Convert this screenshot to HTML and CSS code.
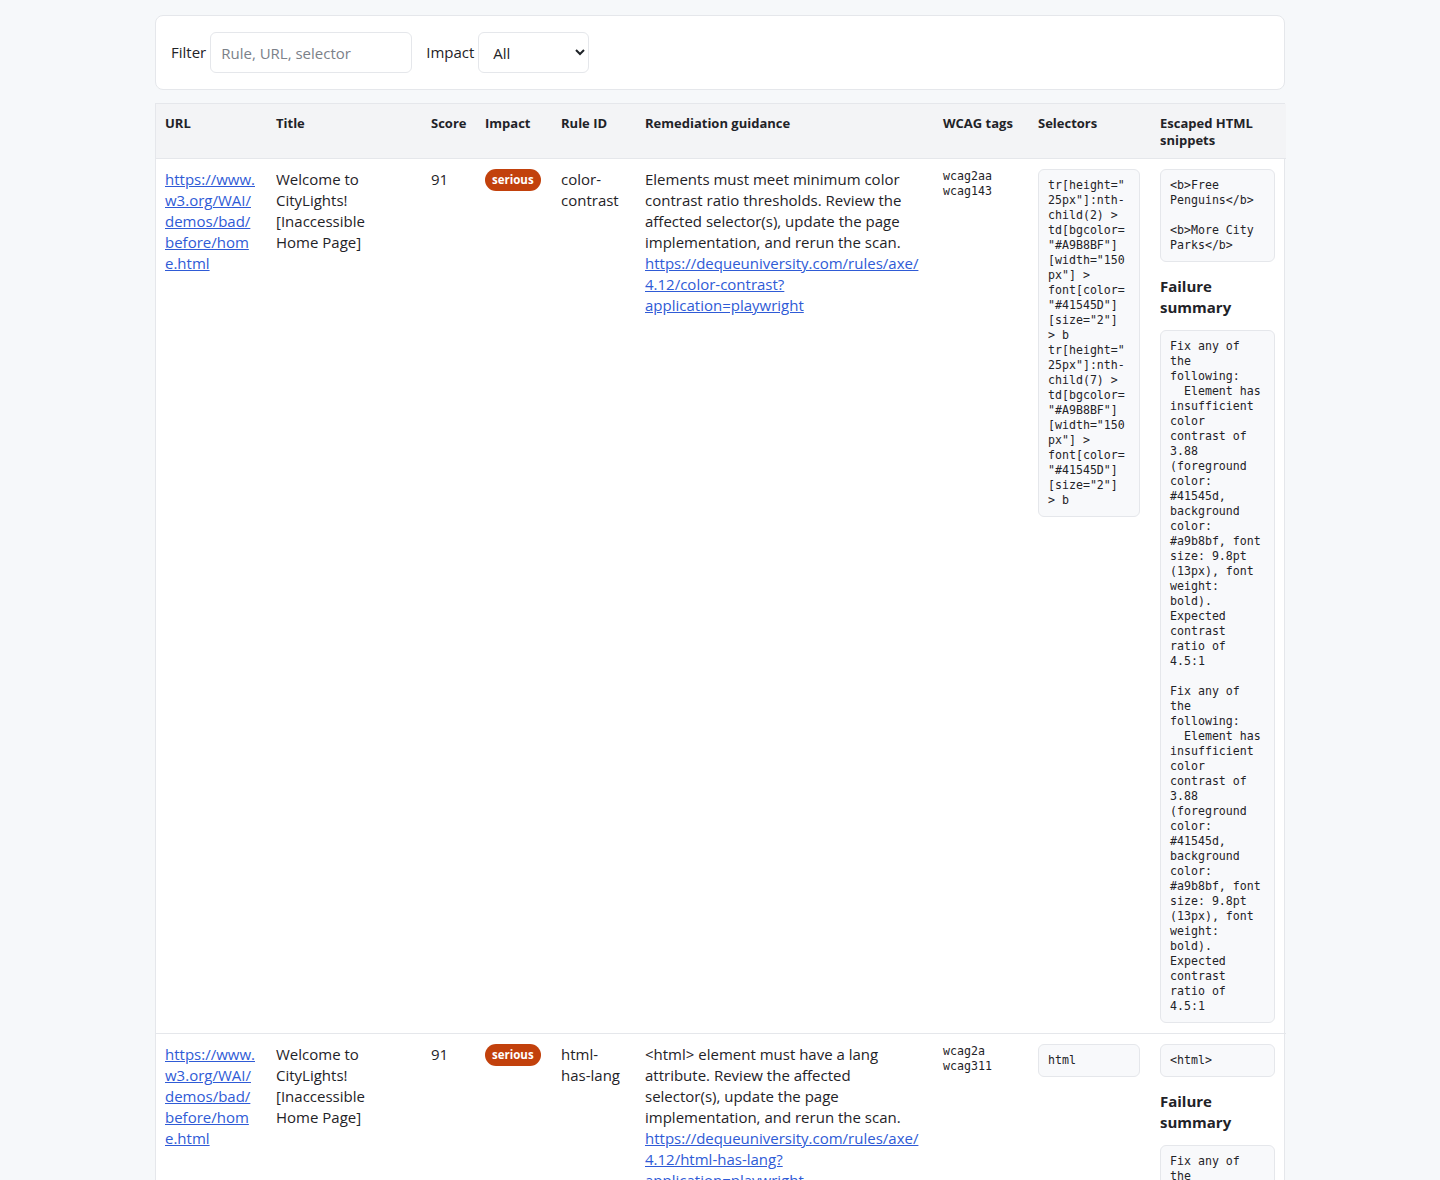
FILE: index.html
```html
<!DOCTYPE html>
<html>
<head>
    <meta charset="utf-8">
    <title>Accessibility Findings</title>
    <meta name="viewport" content="width=device-width, initial-scale=1.0">
    <link rel="stylesheet" href="styles.css">
</head>
<body>
    <div class="page">
        <div class="filters">
            <label class="field">Filter <input type="text" placeholder="Rule, URL, selector"></label>
            <label class="field">Impact
                <select>
                    <option>All</option>
                    <option>critical</option>
                    <option>serious</option>
                    <option>moderate</option>
                    <option>minor</option>
                </select>
            </label>
        </div>

        <div class="results">
            <table>
                <colgroup>
                    <col style="width:111px">
                    <col style="width:155px">
                    <col style="width:54px">
                    <col style="width:76px">
                    <col style="width:84px">
                    <col style="width:298px">
                    <col style="width:95px">
                    <col style="width:122px">
                    <col style="width:135px">
                </colgroup>
                <thead>
                    <tr>
                        <th>URL</th>
                        <th>Title</th>
                        <th>Score</th>
                        <th>Impact</th>
                        <th>Rule ID</th>
                        <th>Remediation guidance</th>
                        <th>WCAG tags</th>
                        <th>Selectors</th>
                        <th>Escaped HTML snippets</th>
                    </tr>
                </thead>
                <tbody>
                    <tr>
                        <td class="url"><a href="#">https://www.w3.org/WAI/demos/bad/before/home.html</a></td>
                        <td>Welcome to CityLights! [Inaccessible Home Page]</td>
                        <td>91</td>
                        <td><span class="badge">serious</span></td>
                        <td>color-contrast</td>
                        <td>Elements must meet minimum color contrast ratio thresholds. Review the affected selector(s), update the page implementation, and rerun the scan. <a href="#">https://dequeuniversity.com/rules/axe/4.12/color-contrast?application=playwright</a></td>
                        <td class="tags">wcag2aa<br>wcag143</td>
                        <td><pre class="code">tr[height="25px"]:nth-child(2) &gt; td[bgcolor="#A9B8BF"][width="150px"] &gt; font[color="#41545D"][size="2"] &gt; b
tr[height="25px"]:nth-child(7) &gt; td[bgcolor="#A9B8BF"][width="150px"] &gt; font[color="#41545D"][size="2"] &gt; b</pre></td>
                        <td>
                            <pre class="code">&lt;b&gt;Free Penguins&lt;/b&gt;

&lt;b&gt;More City Parks&lt;/b&gt;</pre>
                            <h4>Failure summary</h4>
                            <pre class="code">Fix any of the following:
  Element has insufficient color contrast of 3.88 (foreground color: #41545d, background color: #a9b8bf, font size: 9.8pt (13px), font weight: bold). Expected contrast ratio of 4.5:1

Fix any of the following:
  Element has insufficient color contrast of 3.88 (foreground color: #41545d, background color: #a9b8bf, font size: 9.8pt (13px), font weight: bold). Expected contrast ratio of 4.5:1</pre>
                        </td>
                    </tr>
                    <tr>
                        <td class="url"><a href="#">https://www.w3.org/WAI/demos/bad/before/home.html</a></td>
                        <td>Welcome to CityLights! [Inaccessible Home Page]</td>
                        <td>91</td>
                        <td><span class="badge">serious</span></td>
                        <td>html-has-lang</td>
                        <td>&lt;html&gt; element must have a lang attribute. Review the affected selector(s), update the page implementation, and rerun the scan. <a href="#">https://dequeuniversity.com/rules/axe/4.12/html-has-lang?application=playwright</a></td>
                        <td class="tags">wcag2a<br>wcag311</td>
                        <td><pre class="code">html</pre></td>
                        <td>
                            <pre class="code">&lt;html&gt;</pre>
                            <h4>Failure summary</h4>
                            <pre class="code">Fix any of the following:
  The &lt;html&gt; element does not have a lang attribute</pre>
                        </td>
                    </tr>
                </tbody>
            </table>
        </div>
    </div>
</body>
</html>
```

FILE: styles.css
```css
body {
    font-family: "Open Sans", sans-serif;
    font-size: 15px;
    line-height: 21px;
    background: #f6f8fa;
    color: #1f2328;
    margin: 0;
    padding: 0;
}
.page {
    width: 1130px;
    margin: 15px auto 0;
}
.filters {
    display: flex;
    align-items: center;
    gap: 14px;
    background: white;
    border: 1px solid #e5e7eb;
    border-radius: 8px;
    padding: 16px 15px;
}
.field {
    display: flex;
    align-items: center;
    gap: 4px;
    font-size: 15px;
}
.field input,
.field select {
    font-family: inherit;
    font-size: 15px;
    height: 41px;
    box-sizing: border-box;
    border: 1px solid #e5e7eb;
    border-radius: 6px;
    background: white;
    color: #1f2328;
}
.field input {
    width: 202px;
    padding: 0 10px;
}
.field input::placeholder {
    color: #7b8189;
}
.field select {
    width: 111px;
    padding: 0 8px 0 10px;
}
.results {
    margin-top: 13px;
    background: white;
    border: 1px solid #e5e7eb;
}
table {
    width: 100%;
    border-collapse: collapse;
    table-layout: fixed;
}
th {
    background: #f3f4f6;
    font-size: 13px;
    line-height: 17px;
    font-weight: 700;
    text-align: left;
    vertical-align: top;
    padding: 11px 11px 9px 9px;
    border-bottom: 1px solid #e5e7eb;
}
td {
    vertical-align: top;
    padding: 10px 11px 10px 9px;
    border-top: 1px solid #e5e7eb;
    overflow-wrap: anywhere;
}
a {
    color: #2f5bd6;
}
.badge {
    display: inline-block;
    vertical-align: top;
    white-space: nowrap;
    background: #c2410c;
    color: white;
    font-size: 11.5px;
    font-weight: 700;
    line-height: 22px;
    padding: 0 7px;
    border-radius: 11px;
}
.tags {
    font-family: "DejaVu Sans Mono", monospace;
    font-size: 11.6px;
    line-height: 15px;
}
.code {
    font-family: "DejaVu Sans Mono", monospace;
    font-size: 11.6px;
    line-height: 15px;
    white-space: pre-wrap;
    overflow-wrap: anywhere;
    margin: 0;
    padding: 8px 9px;
    background: #f8f9fb;
    border: 1px solid #e5e7eb;
    border-radius: 6px;
}
h4 {
    font-size: 15px;
    line-height: 21px;
    margin: 14px 0 12px;
}
```
